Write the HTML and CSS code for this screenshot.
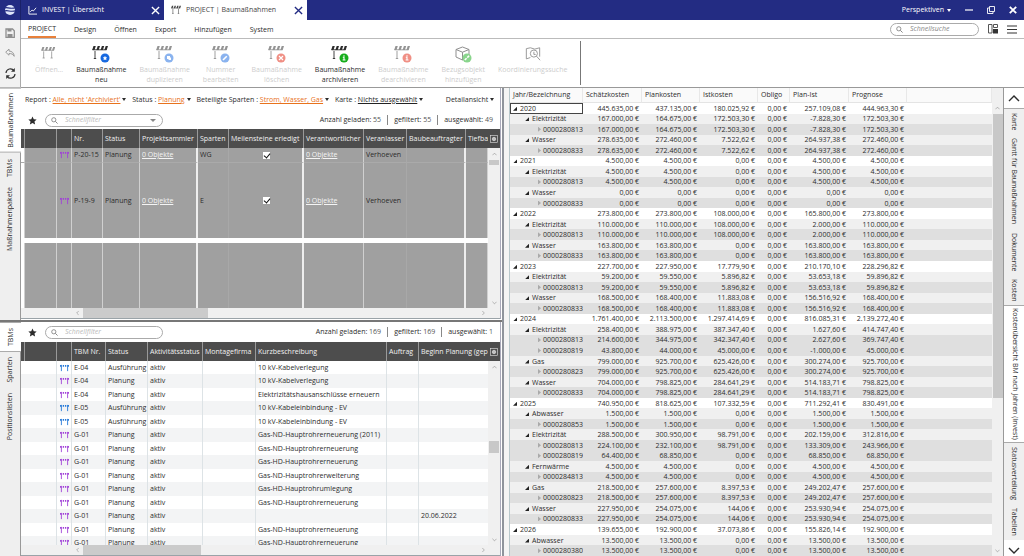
FILE: index.html
```html
<!DOCTYPE html>
<html lang="de">
<head>
<meta charset="utf-8">
<title>PROJECT | Baumaßnahmen</title>
<link rel="stylesheet" href="styles.css">
</head>
<body>
<svg class="defs" aria-hidden="true">
  <symbol id="barrier" viewBox="0 0 16 16"><path d="M1.500 1h2.300L2.500 5H.2zM5.700 1H8L6.700 5H4.400zM9.900 1h2.300l-1.300 4H8.600zM13.700 1H16l-1.300 4h-2.300z" fill="currentColor"/><path d="M.5 4.800h14M3 6v7.500M12 6v7.500M1.800 13.500h2.400M10.800 13.500h2.400" stroke="currentColor" stroke-width=".9" fill="none"/></symbol>
  <symbol id="barrier-half" viewBox="0 0 16 16"><path d="M1.500 1h2.300L2.500 5H.2zM5.700 1H8L6.700 5H4.400zM9.900 1h2.300l-1.300 4H8.600zM13.700 1H16l-1.300 4h-2.300z" fill="currentColor"/><path d="M.5 4.800h14M3 6v7.500M1.800 13.500h2.400" stroke="currentColor" stroke-width=".9" fill="none"/></symbol>
  <symbol id="mini" viewBox="0 0 10 9"><path d="M0 1h1.500v2H0zM3 1h1.500v2H3zM5.500 1H7v2H5.500zM8.500 1H10v2H8.500z" fill="currentColor"/><path d="M1.500 1v7M8.500 1v7" stroke="currentColor" stroke-width="1"/></symbol>
  <symbol id="x" viewBox="0 0 10 10"><path d="M1 1l8 8M9 1L1 9" stroke="currentColor" stroke-width="1.500" fill="none"/></symbol>
  <symbol id="xbold" viewBox="0 0 10 10"><path d="M1 1l8 8M9 1L1 9" stroke="currentColor" stroke-width="2.300" fill="none"/></symbol>
  <symbol id="lens" viewBox="0 0 8 8"><circle cx="3.200" cy="3.200" r="2.400" fill="none" stroke="currentColor" stroke-width=".9"/><path d="M5 5l2.500 2.500" stroke="currentColor"/></symbol>
  <symbol id="star" viewBox="0 0 10 10"><path d="M5 .5l1.400 3 3.200.4-2.400 2.200.7 3.300L5 7.800 2.100 9.400l.7-3.300L.4 3.900l3.200-.4z" fill="currentColor"/></symbol>
  <symbol id="gear" viewBox="0 0 9 9"><rect x=".5" y=".5" width="8" height="8" fill="none" stroke="currentColor" stroke-width=".7"/><circle cx="4.500" cy="4.500" r="1.700" fill="none" stroke="currentColor" stroke-width="1"/><path d="M4.500 2v5M2 4.500h5M2.800 2.800l3.400 3.400M6.200 2.800L2.800 6.200" stroke="currentColor" stroke-width=".6"/></symbol>
  <symbol id="chev" viewBox="0 0 12 8"><path d="M1 7l5-5 5 5" fill="none" stroke="currentColor" stroke-width="1.400"/></symbol>
</svg>

<header class="titlebar">
  <span class="logo"><svg viewBox="0 0 12 12" width="12" height="12"><circle cx="6" cy="6" r="5" fill="#dfe6fa"/><path d="M0 4.200c3-2 5 1.600 12-.6M0 7.200c4-2 6 1.600 12-.6" stroke="#232c83" stroke-width="1.100" fill="none"/></svg></span>
  <div class="wintab"><svg viewBox="0 0 10 10" width="9" height="9"><path d="M1 0v9h9M2.500 6.500l2-2 1.500 1L9 2" stroke="#fff" fill="none"/></svg><span>INVEST | Übersicht</span><button aria-label="Schließen"><svg width="9" height="9"><use href="#x"/></svg></button></div>
  <div class="wintab current"><svg width="10" height="10"><use href="#barrier"/></svg><span>PROJECT | Baumaßnahmen</span><button aria-label="Schließen"><svg width="9" height="9"><use href="#x"/></svg></button></div>
  <div class="wincontrols">
    <button class="persp">Perspektiven <i class="caret"></i></button>
    <button aria-label="Minimieren"><svg width="8" height="8" viewBox="0 0 8 8"><path d="M0 4h8" stroke="#fff" stroke-width="1.200"/></svg></button>
    <button aria-label="Wiederherstellen"><svg width="8" height="8" viewBox="0 0 8 8"><path d="M2.500.5h5v5h-5zM2.500 2H.5v5.500H6V5.500" stroke="#fff" fill="none" stroke-width=".9"/></svg></button>
    <button aria-label="Fenster schließen"><svg width="8" height="8"><use href="#xbold"/></svg></button>
  </div>
</header>

<section class="top">
  <aside class="quick">
    <button aria-label="Speichern"><svg width="10" height="10" viewBox="0 0 10 10"><path d="M1 1h6.500L9.300 2.800V9.300H1z" fill="none" stroke="#8e8e8e" stroke-width="1.300"/><path d="M2.500 1h4v2.500h-4zM2.500 6h5v3h-5z" fill="#8e8e8e"/></svg></button>
    <button aria-label="Rückgängig"><svg width="10" height="10" viewBox="0 0 10 10"><path d="M4 1L.7 4.200 4 7.200V5.500c2.500 0 4 .6 5.200 2.800C9 5 7 3.100 4 3z" fill="none" stroke="#9b9b9b"/></svg></button>
    <button aria-label="Aktualisieren"><svg width="11" height="11" viewBox="0 0 11 11"><path d="M1 5a4.400 4.400 0 0 1 8-2.300M10 6a4.400 4.400 0 0 1-8 2.300" fill="none" stroke="#333" stroke-width="1.200"/><path d="M9.800 0v3.800H6zM1.200 11V7.200H5z" fill="#333"/></svg></button>
  </aside>
  <div class="ribbon">
    <nav class="menu">
      <a href="#" class="on">PROJECT</a><a href="#">Design</a><a href="#">Öffnen</a><a href="#">Export</a><a href="#">Hinzufügen</a><a href="#">System</a>
      <div class="menuright">
        <label class="search"><svg width="7" height="7"><use href="#lens"/></svg><input type="text" placeholder="Schnellsuche" aria-label="Schnellsuche"></label>
        <button aria-label="Layout"><svg width="10" height="10" viewBox="0 0 10 10"><path d="M.5.500h3.500v8.500H.5zM5.500.500h4v3h-4z" fill="none" stroke="#555"/><path d="M5 5h5v4.500H5z" fill="#333"/></svg></button>
        <button aria-label="Menü"><svg width="10" height="9" viewBox="0 0 10 9"><path d="M0 1h10M0 4.500h10M0 8h10" stroke="#333" stroke-width="1.200"/></svg></button>
      </div>
    </nav>
    <div class="tools">
      <button disabled><svg width="16" height="16" viewBox="0 0 18 18"><use href="#barrier" width="16" height="16"/></svg><span>Öffnen...</span></button>
      <button><svg width="18" height="18" viewBox="0 0 18 18"><use href="#barrier-half" width="16" height="16"/><circle cx="13" cy="13" r="4.500" fill="#1769e0"/><use href="#star" x="10.500" y="10.500" width="5" height="5" color="#fff"/></svg><span>Baumaßnahme<br>neu</span></button>
      <button disabled><svg width="18" height="18" viewBox="0 0 18 18"><use href="#barrier-half" width="16" height="16"/><circle cx="13" cy="13" r="4.500" fill="#1769e0"/><path d="M11 11h3v3h-3zM12.500 12.500h2.500V15h-2.500z" fill="#fff"/></svg><span>Baumaßnahme<br>duplizieren</span></button>
      <button disabled><svg width="18" height="18" viewBox="0 0 18 18"><use href="#barrier-half" width="16" height="16"/><circle cx="13" cy="13" r="4.500" fill="#1769e0"/><path d="M11 15l3.800-3.800" stroke="#fff" stroke-width="1.600"/></svg><span>Nummer<br>bearbeiten</span></button>
      <button disabled><svg width="18" height="18" viewBox="0 0 18 18"><use href="#barrier-half" width="16" height="16"/><circle cx="13" cy="13" r="4.500" fill="#e2210c"/><path d="M11 11l4 4M15 11l-4 4" stroke="#fff" stroke-width="1.200"/></svg><span>Baumaßnahme<br>löschen</span></button>
      <button><svg width="18" height="18" viewBox="0 0 18 18"><use href="#barrier-half" width="16" height="16"/><circle cx="13" cy="13" r="4.500" fill="#16ad1c"/><path d="M13 10.200v1.200M11.800 12.300H13v2.900M11.600 15h2.900" stroke="#fff" stroke-width="1.100" fill="none"/></svg><span>Baumaßnahme<br>archivieren</span></button>
      <button disabled><svg width="18" height="18" viewBox="0 0 18 18"><use href="#barrier-half" width="16" height="16"/><circle cx="13" cy="13" r="4.500" fill="#e2210c"/><path d="M13 10.200v1.200M11.800 12.300H13v2.900M11.600 15h2.900" stroke="#fff" stroke-width="1.100" fill="none"/></svg><span>Baumaßnahme<br>dearchivieren</span></button>
      <button disabled><svg width="18" height="18" viewBox="0 0 18 18"><path d="M2 4.500L8.500 2 15 4.500v7.500l-6.500 3L2 12zM2 4.500l6.500 2.700L15 4.500M8.500 7.200V15" fill="none" stroke="#222"/><circle cx="13" cy="13" r="4.500" fill="#16ad1c"/><path d="M10.800 15l1.800-1.800M13.300 12.600l1.800-1.800" stroke="#fff" stroke-width="1.600"/></svg><span>Bezugsobjekt<br>hinzufügen</span></button>
      <button disabled><svg width="16" height="16" viewBox="0 0 18 18"><path d="M6 13l-4.500 1.500V3L6 2l5 1.500L16.500 2v10" fill="none" stroke="#222"/><circle cx="10" cy="8.500" r="4" fill="none" stroke="#222"/><path d="M13 11.500l4 4.500M10 6.500v3h2" stroke="#222" fill="none"/></svg><span>Koordinierungssuche</span></button>
    </div>
  </div>
</section>

<main class="work">
  <div class="left">
    <section class="pane pane-a">
      <nav class="vtabs lefttabs"><button class="on">Baumaßnahmen</button><button>TBMs</button><button>Maßnahmenpakete</button></nav>
      <div class="body">
        <div class="filters">
          <span>Report : <a href="#">Alle, nicht 'Archiviert'</a> <i class="caret"></i></span>
          <span>Status : <a href="#">Planung</a> <i class="caret"></i></span>
          <span>Beteiligte Sparten : <a href="#">Strom, Wasser, Gas</a> <i class="caret"></i></span>
          <span>Karte : <a href="#" class="dark">Nichts ausgewählt</a> <i class="caret"></i></span>
          <span class="detail">Detailansicht <i class="caret"></i></span>
        </div>
        <div class="find">
          <svg class="fav" width="9" height="9"><use href="#star"/></svg>
          <label class="search wide"><svg width="7" height="7"><use href="#lens"/></svg><input type="text" placeholder="Schnellfilter" aria-label="Schnellfilter Baumaßnahmen"><i class="caret soft"></i></label>
          <p class="counts"><span>Anzahl geladen: <b>55</b></span><span>gefiltert: <b>55</b></span><span>ausgewählt: <b>49</b></span></p>
        </div>
        <div class="gridwrap">
          <div class="clip">
            <table class="grid measures">
              <colgroup><col class="w4"><col class="w32"><col class="w15"><col class="w31"><col class="w37"><col class="w58"><col class="w31"><col class="w75"><col class="w60"><col class="w43"><col class="w59"><col></colgroup>
              <thead><tr><th></th><th></th><th></th><th>Nr.</th><th>Status</th><th>Projektsammler</th><th>Sparten</th><th>Meilensteine erledigt</th><th>Verantwortlicher</th><th>Veranlasser</th><th>Baubeauftragter</th><th>Tiefba</th></tr></thead>
              <tbody>
                <tr class="short"><td></td><td></td><td class="ic"><svg class="violet" width="9" height="8"><use href="#mini"/></svg></td><td>P-20-15</td><td>Planung</td><td><a href="#">0 Objekte</a></td><td>WG</td><td class="mid"><input type="checkbox" checked aria-label="Meilensteine erledigt P-20-15"></td><td><a href="#">0 Objekte</a></td><td>Verhoeven</td><td></td><td></td></tr>
                <tr class="tall"><td></td><td></td><td class="ic"><svg class="violet" width="9" height="8"><use href="#mini"/></svg></td><td>P-19-9</td><td>Planung</td><td><a href="#">0 Objekte</a></td><td>E</td><td class="mid"><input type="checkbox" checked aria-label="Meilensteine erledigt P-19-9"></td><td><a href="#">0 Objekte</a></td><td>Verhoeven</td><td></td><td></td></tr>
                <tr class="gap"><td colspan="12"></td></tr>
                <tr class="rest"><td></td><td></td><td></td><td></td><td></td><td></td><td></td><td></td><td></td><td></td><td></td><td></td></tr>
              </tbody>
            </table>
          </div>
          <div class="vscroll"><span class="cfg"><svg width="8" height="8"><use href="#gear"/></svg></span><svg class="up" width="5" height="4"><use href="#chev"/></svg><i class="thumb"></i><svg class="down" width="5" height="4"><use href="#chev"/></svg></div>
        </div>
        <div class="hscroll"><svg class="west" width="5" height="4"><use href="#chev"/></svg><i class="thumb"></i><svg class="east" width="5" height="4"><use href="#chev"/></svg></div>
      </div>
    </section>
    <section class="pane pane-b">
      <nav class="vtabs lefttabs"><button class="on">TBMs</button><button>Sparten</button><button>Positionslisten</button></nav>
      <div class="body">
        <div class="find">
          <svg class="fav" width="9" height="9"><use href="#star"/></svg>
          <label class="search wide"><svg width="7" height="7"><use href="#lens"/></svg><input type="text" placeholder="Schnellfilter" aria-label="Schnellfilter TBMs"></label>
          <p class="counts"><span>Anzahl geladen: <b>169</b></span><span>gefiltert: <b>169</b></span><span>ausgewählt: <b>1</b></span></p>
        </div>
        <div class="gridwrap">
          <div class="clip">
            <table class="grid tbm">
              <colgroup><col class="w4"><col class="w32"><col class="w15"><col class="w34"><col class="w42"><col class="w55"><col class="w53"><col class="w131"><col class="w32"><col></colgroup>
              <thead><tr><th></th><th></th><th></th><th>TBM Nr.</th><th>Status</th><th>Aktivitätsstatus</th><th>Montagefirma</th><th>Kurzbeschreibung</th><th>Auftrag</th><th>Beginn Planung (gep</th></tr></thead>
              <tbody id="tbm-rows"></tbody>
            </table>
          </div>
          <div class="vscroll"><span class="cfg"><svg width="8" height="8"><use href="#gear"/></svg></span><svg class="up" width="5" height="4"><use href="#chev"/></svg><i class="thumb"></i><svg class="down" width="5" height="4"><use href="#chev"/></svg></div>
        </div>
        <div class="hscroll"><svg class="west" width="5" height="4"><use href="#chev"/></svg><i class="thumb"></i><svg class="east" width="5" height="4"><use href="#chev"/></svg></div>
      </div>
    </section>
  </div>
  <div class="divider"></div>
  <section class="costs">
    <table class="tree">
      <colgroup><col class="w73"><col class="w59"><col class="w58"><col class="w58"><col class="w32"><col class="w59"><col class="w58"><col></colgroup>
      <thead><tr><th>Jahr/Bezeichnung</th><th>Schätzkosten</th><th>Plankosten</th><th>Istkosten</th><th>Obligo</th><th>Plan-Ist</th><th>Prognose</th><th></th></tr></thead>
      <tbody id="cost-rows"></tbody>
    </table>
    <div class="vscroll"><svg class="up" width="5" height="4"><use href="#chev"/></svg><i class="thumb"></i><svg class="down" width="5" height="4"><use href="#chev"/></svg></div>
  </section>
  <nav class="vtabs righttabs">
    <button class="nudge" aria-label="Nach oben"><svg width="12" height="8"><use href="#chev"/></svg></button>
    <button>Karte</button><button>Gantt für Baumaßnahmen</button><button>Dokumente</button><button>Kosten</button><button class="on">Kostenübersicht BM nach Jahren (Invest)</button><button>Statusverteilung</button><button>Tabellen</button>
    <button class="nudge last" aria-label="Nach unten"><svg class="down" width="12" height="8"><use href="#chev"/></svg></button>
  </nav>
</main>
<script src="data.js"></script>
</body>
</html>
```
FILE: styles.css
```css
* { box-sizing: border-box; }
body {
  margin: 0;
  height: 100vh;
  display: flex;
  flex-direction: column;
  overflow: hidden;
  font: 7px/10px "Open Sans", "Noto Sans", sans-serif;
  color: #2c2c2c;
  background: #fff;
}
button, input { font: inherit; color: inherit; border: 0; padding: 0; margin: 0; background: none; }
button { display: flex; align-items: center; justify-content: center; }
a { color: inherit; text-decoration: none; }
svg { flex: none; display: block; }
.defs { display: none; }
.caret { display: inline-block; border: 2px solid transparent; border-top: 3px solid currentColor; border-bottom: 0; vertical-align: 1px; }
.caret.soft { color: #888; border-width: 3px 3px 0; margin-right: 6px; }
.down { transform: rotate(180deg); }
.west { transform: rotate(-90deg); }
.east { transform: rotate(90deg); }

.titlebar { display: flex; flex: none; height: 20px; background: #232c83; color: #fff; }
.logo { width: 21px; display: grid; place-items: center; border-right: 1px solid #1a2168; }
.wintab { display: flex; align-items: center; width: 143px; padding: 0 4px 0 7px; gap: 5px; }
.wintab span { flex: 1; white-space: nowrap; }
.wintab.current { background: #fff; color: #444; }
.wintab.current button { color: #232c83; }
.wincontrols { margin-left: auto; display: flex; gap: 14px; padding-right: 7px; }
.persp { gap: 3px; }

.top { display: flex; flex: none; height: 68px; border-bottom: 1px solid #999; }
.quick { width: 21px; border-right: 1px solid #aaa; background: #f1f1f1; display: flex; flex-direction: column; align-items: center; gap: 10px; padding-top: 8px; }
.ribbon { flex: 1; }
.menu { display: flex; gap: 18px; height: 19px; padding: 0 7px; border-bottom: 1px solid #bbb; }
.menu > a { line-height: 19px; }
.menu > a.on { border-bottom: 2px solid #e8803a; line-height: 18px; }
.menuright { margin-left: auto; display: flex; align-items: center; gap: 9px; }
.search { display: flex; align-items: center; gap: 7px; width: 89px; height: 13px; padding-left: 5px; border: 1px solid #aaa; border-radius: 7px; color: #777; background: #fff; }
.search input { flex: 1; min-width: 0; height: 10px; font-style: italic; outline: none; }
.search input::placeholder { color: #888; opacity: 1; }
.search.wide { width: 118px; }
.search.wide input::placeholder { color: #bbb; }
.tools { display: flex; align-items: stretch; gap: 13px; width: 557px; height: 48px; padding: 6px 0 0 14px; }
.tools button { flex-direction: column; justify-content: flex-start; gap: 2px; text-align: center; white-space: nowrap; }
.tools button svg { height: 18px; }
.tools button:disabled { opacity: .5; }
.tools button:disabled span { color: #999; }
.tools::after { content: ""; border-right: 1px solid #777; margin: -4px 0 2px auto; }

.work { display: flex; flex: 1; min-height: 0; }
.left { flex: 0 1 502px; min-width: 0; display: flex; flex-direction: column; }
.pane { display: flex; min-height: 0; }
.pane-a { flex: 1 1 234px; border-bottom: 2px solid #777; }
.pane-b { flex: 1 1 234px; }
.body { flex: 1; min-width: 0; display: flex; flex-direction: column; border-bottom: 1px solid #9aa3a8; border-right: 1px solid #aab; margin-right: 1px; }
.pane-a .body { margin-bottom: 1px; }

.vtabs { flex: none; width: 21px; display: flex; flex-direction: column; background: #efefef; border-right: 1px solid #999; }
.vtabs button { writing-mode: vertical-rl; white-space: nowrap; flex: none; }
.lefttabs button { width: 20px; padding: 5px 0; transform: rotate(180deg); }
.pane-a .lefttabs { gap: 2px; }
.pane-a .lefttabs button { padding: 4px 0; }
.vtabs .on { background: #fff; width: 21px; border: solid #aaa; border-width: 1px 0; }
.righttabs { border: 0; border-left: 1px solid #999; overflow: hidden; }
.righttabs button { width: 20px; padding: 4px 0; }
.righttabs .on { padding: 2px 0; }
.righttabs .nudge { height: 21px; background: #fff; border-bottom: 1px solid #aaa; }
.righttabs .last { margin-top: auto; border: 0; }

.filters { display: flex; flex: none; gap: 6px; height: 21px; align-items: center; padding: 3px 6px 0 4px; white-space: nowrap; }
.filters a { color: #e8721c; text-decoration: underline; }
.filters a.dark { color: #222; }
.filters .detail { margin-left: auto; }
.find { display: flex; flex: none; align-items: center; height: 20px; padding: 0 7px; gap: 8px; }
.pane-a .find { padding-top: 2px; }
.counts { margin: 0 0 0 auto; display: flex; white-space: nowrap; }
.counts b { font-weight: 400; color: #555; }
.counts span + span { border-left: 1px solid #888; margin-left: 6px; padding-left: 6px; }

.gridwrap { flex: 1; min-height: 0; display: flex; }
.clip { flex: 1; min-width: 0; overflow: hidden; }
.vscroll { flex: none; width: 12px; display: flex; flex-direction: column; align-items: center; background: #f0f0f0; color: #888; }
.cfg { width: 100%; height: 19px; background: #4d4d4d; color: #ddd; display: grid; place-items: center; }
.vscroll .up { margin: 4px 0; }
.vscroll .down { margin: auto 0 3px; }
.vscroll .thumb { width: 10px; height: 5px; background: #c8c8c8; }
.pane-b .thumb { height: 12px; margin-top: 68px; }
.hscroll { flex: none; height: 10px; display: flex; align-items: center; background: #f0f0f0; color: #888; padding: 0 14px 0 54px; }
.hscroll .thumb { width: 125px; height: 10px; background: #cbcbcb; margin: 0 auto 0 3px; }
.pane-b .hscroll .thumb { width: 118px; height: 10px; margin-top: 0; }

table { border-collapse: separate; border-spacing: 0; table-layout: fixed; width: 100%; }
th, td { padding: 0 0 0 2px; font-weight: 400; text-align: left; white-space: nowrap; overflow: hidden; line-height: 8px; }
.w4 { width: 4px; } .w15 { width: 15px; } .w31 { width: 31px; } .w32 { width: 32px; } .w34 { width: 34px; }
.w37 { width: 37px; } .w42 { width: 42px; } .w43 { width: 43px; } .w53 { width: 53px; } .w55 { width: 55px; }
.w58 { width: 58px; } .w59 { width: 59px; } .w60 { width: 60px; } .w73 { width: 73px; } .w75 { width: 75px; } .w131 { width: 131px; }
.grid th { height: 19px; background: #4d4d4d; color: #f2f2f2; border-right: 1px solid #999; }
.grid th:last-child { border-right: 0; }
.grid td.ic { padding: 0; }
.ic svg { margin: 0 auto; }
.violet { color: #a040d8; }
.blue { color: #2478d8; }
.measures td { background: #a0a0a0; border-right: 1px solid #d0d0d0; }
.measures td:nth-child(1) { background: #fff; }
.measures td:nth-child(6), .measures td:nth-child(8), .measures td:nth-child(11) { border-right: 2px solid #eee; }
.measures td:nth-child(7), .measures td:nth-child(10) { border-right-color: #a8a8a8; }
.measures a { color: #f4f4f4; text-decoration: underline; }
.measures .short td { height: 15px; border-bottom: 1px solid #aaa; }
.measures .tall td { height: 75px; }
.measures .gap td { height: 5px; background: #fff; border: 0; }
.measures .rest td { height: 66px; }
.mid { text-align: center; }
.mid input { appearance: none; display: block; width: 7px; height: 7px; margin: 0 auto; background: #fff; }
.mid input:checked::after { content: ""; display: block; width: 3px; height: 5px; margin-left: 2px; border: solid #111; border-width: 0 1px 1px 0; transform: rotate(40deg); }
.tbm td { height: 13px; border-right: 1px solid #dde3e6; }
.tbm tr:nth-child(even) td { height: 14px; background: #f3f4f5; }
.tbm td:nth-child(1), .tbm td:last-child { border-right-color: transparent; }

.divider { flex: none; width: 8px; border: solid #8f949c; border-width: 0 1px 0 2px; background: #f4f4f4; border-right-color: #b8c8cc; }
.costs { flex: 1; min-width: 0; display: flex; }
.tree { flex: 1; width: auto; height: 100%; }
.tree th { height: 15px; padding-left: 3px; background: #fafafa; border-right: 1px solid #e8e8e8; border-bottom: 1px solid #e4e4e4; }
.tree td { text-align: right; padding: 0 3px 0 0; line-height: 7px; }
.tree td:first-child { text-align: left; padding: 0 0 0 3px; }
.tree .l1 td { background: #f0f0f0; }
.tree .l2 td { background: #dfdfdf; }
.tree .l1 td:first-child { padding-left: 15px; }
.tree .l2 td:first-child { padding-left: 27px; }
.tree .focus td:first-child { outline: 1px solid #444; outline-offset: -1px; }
.open, .shut { display: inline-block; margin-right: 3px; }
.open { width: 4px; height: 4px; background: #222; clip-path: polygon(100% 0, 100% 100%, 0 100%); }
.shut { width: 3px; height: 5px; margin: 0 2px 0 1px; background: #aaa; clip-path: polygon(0 0, 100% 50%, 0 100%); }
.costs .vscroll { width: 11px; padding-top: 14px; }
.costs .vscroll .thumb { height: 284px; }
```
FILE: data.js
```js
const tbm = [
  ["b", "E-04", "10 kV-Kabelverlegung"],
  ["v", "E-04", "10 kV-Kabelverlegung"],
  ["v", "E-04", "Elektrizitätshausanschlüsse erneuern"],
  ["b", "E-05", "10 kV-Kabeleinbindung - EV"],
  ["b", "E-05", "10 kV-Kabeleinbindung - EV"],
  ["v", "G-01", "Gas-ND-Hauptrohrerneuerung (2011)"],
  ["v", "G-01", "Gas-ND-Hauptrohrerneuerung"],
  ["v", "G-01", "Gas-HD-Hauptrohrerneuerung"],
  ["v", "G-01", "Gas-ND-Hauptrohrerweiterung"],
  ["v", "G-01", "Gas-HD-Hauptrohrumlegung"],
  ["v", "G-01", "Gas-ND-Hauptrohrerneuerung"],
  ["v", "G-01", "", "20.06.2022"],
  ["v", "G-01", "Gas-ND-Hauptrohrerneuerung"],
  ["v", "G-01", "Gas-ND-Hauptrohrerneuerung"]
];
document.getElementById("tbm-rows").innerHTML = tbm.map(([kind, nr, text, date = ""]) =>
  `<tr><td></td><td></td><td class="ic"><svg class="${kind === "b" ? "blue" : "violet"}" width="9" height="8"><use href="#mini"/></svg></td><td>${nr}</td><td>${kind === "b" ? "Ausführung" : "Planung"}</td><td>aktiv</td><td></td><td>${text}</td><td></td><td>${date}</td></tr>`
).join("");

// level | label | Schätzkosten | Plankosten | Istkosten | Plan-Ist | Prognose
const costs = `0|2020|445.635,00|437.135,00|180.025,92|257.109,08|444.963,30
1|Elektrizität|167.000,00|164.675,00|172.503,30|-7.828,30|172.503,30
2|0000280813|167.000,00|164.675,00|172.503,30|-7.828,30|172.503,30
1|Wasser|278.635,00|272.460,00|7.522,62|264.937,38|272.460,00
2|0000280833|278.635,00|272.460,00|7.522,62|264.937,38|272.460,00
0|2021|4.500,00|4.500,00|0,00|4.500,00|4.500,00
1|Elektrizität|4.500,00|4.500,00|0,00|4.500,00|4.500,00
2|0000280813|4.500,00|4.500,00|0,00|4.500,00|4.500,00
1|Wasser|0,00|0,00|0,00|0,00|0,00
2|0000280833|0,00|0,00|0,00|0,00|0,00
0|2022|273.800,00|273.800,00|108.000,00|165.800,00|273.800,00
1|Elektrizität|110.000,00|110.000,00|108.000,00|2.000,00|110.000,00
2|0000280813|110.000,00|110.000,00|108.000,00|2.000,00|110.000,00
1|Wasser|163.800,00|163.800,00|0,00|163.800,00|163.800,00
2|0000280833|163.800,00|163.800,00|0,00|163.800,00|163.800,00
0|2023|227.700,00|227.950,00|17.779,90|210.170,10|228.296,82
1|Elektrizität|59.200,00|59.550,00|5.896,82|53.653,18|59.896,82
2|0000280813|59.200,00|59.550,00|5.896,82|53.653,18|59.896,82
1|Wasser|168.500,00|168.400,00|11.883,08|156.516,92|168.400,00
2|0000280833|168.500,00|168.400,00|11.883,08|156.516,92|168.400,00
0|2024|1.761.400,00|2.113.500,00|1.297.414,69|816.085,31|2.139.272,40
1|Elektrizität|258.400,00|388.975,00|387.347,40|1.627,60|414.747,40
2|0000280813|214.600,00|344.975,00|342.347,40|2.627,60|369.747,40
2|0000280819|43.800,00|44.000,00|45.000,00|-1.000,00|45.000,00
1|Gas|799.000,00|925.700,00|625.426,00|300.274,00|925.700,00
2|0000280823|799.000,00|925.700,00|625.426,00|300.274,00|925.700,00
1|Wasser|704.000,00|798.825,00|284.641,29|514.183,71|798.825,00
2|0000280833|704.000,00|798.825,00|284.641,29|514.183,71|798.825,00
0|2025|740.950,00|818.625,00|107.332,59|711.292,41|830.491,00
1|Abwasser|1.500,00|1.500,00|0,00|1.500,00|1.500,00
2|0000280853|1.500,00|1.500,00|0,00|1.500,00|1.500,00
1|Elektrizität|288.500,00|300.950,00|98.791,00|202.159,00|312.816,00
2|0000280813|224.100,00|232.100,00|98.791,00|133.309,00|243.966,00
2|0000280819|64.400,00|68.850,00|0,00|68.850,00|68.850,00
1|Fernwärme|4.500,00|4.500,00|0,00|4.500,00|4.500,00
2|0000284813|4.500,00|4.500,00|0,00|4.500,00|4.500,00
1|Gas|218.500,00|257.600,00|8.397,53|249.202,47|257.600,00
2|0000280823|218.500,00|257.600,00|8.397,53|249.202,47|257.600,00
1|Wasser|227.950,00|254.075,00|144,06|253.930,94|254.075,00
2|0000280833|227.950,00|254.075,00|144,06|253.930,94|254.075,00
0|2026|139.655,00|192.900,00|37.073,86|155.826,14|192.900,00
1|Abwasser|13.500,00|13.500,00|0,00|13.500,00|13.500,00
2|0000280380|13.500,00|13.500,00|0,00|13.500,00|13.500,00`;
document.getElementById("cost-rows").innerHTML = costs.split("\n").map((line, i) => {
  const [level, label, est, plan, actual, diff, forecast] = line.split("|");
  const money = [est, plan, actual, "0,00", diff, forecast].map(v => `<td>${v} €</td>`).join("");
  return `<tr class="l${level}${i ? "" : " focus"}"><td><i class="${level === "2" ? "shut" : "open"}"></i>${label}</td>${money}<td></td></tr>`;
}).join("");
```
